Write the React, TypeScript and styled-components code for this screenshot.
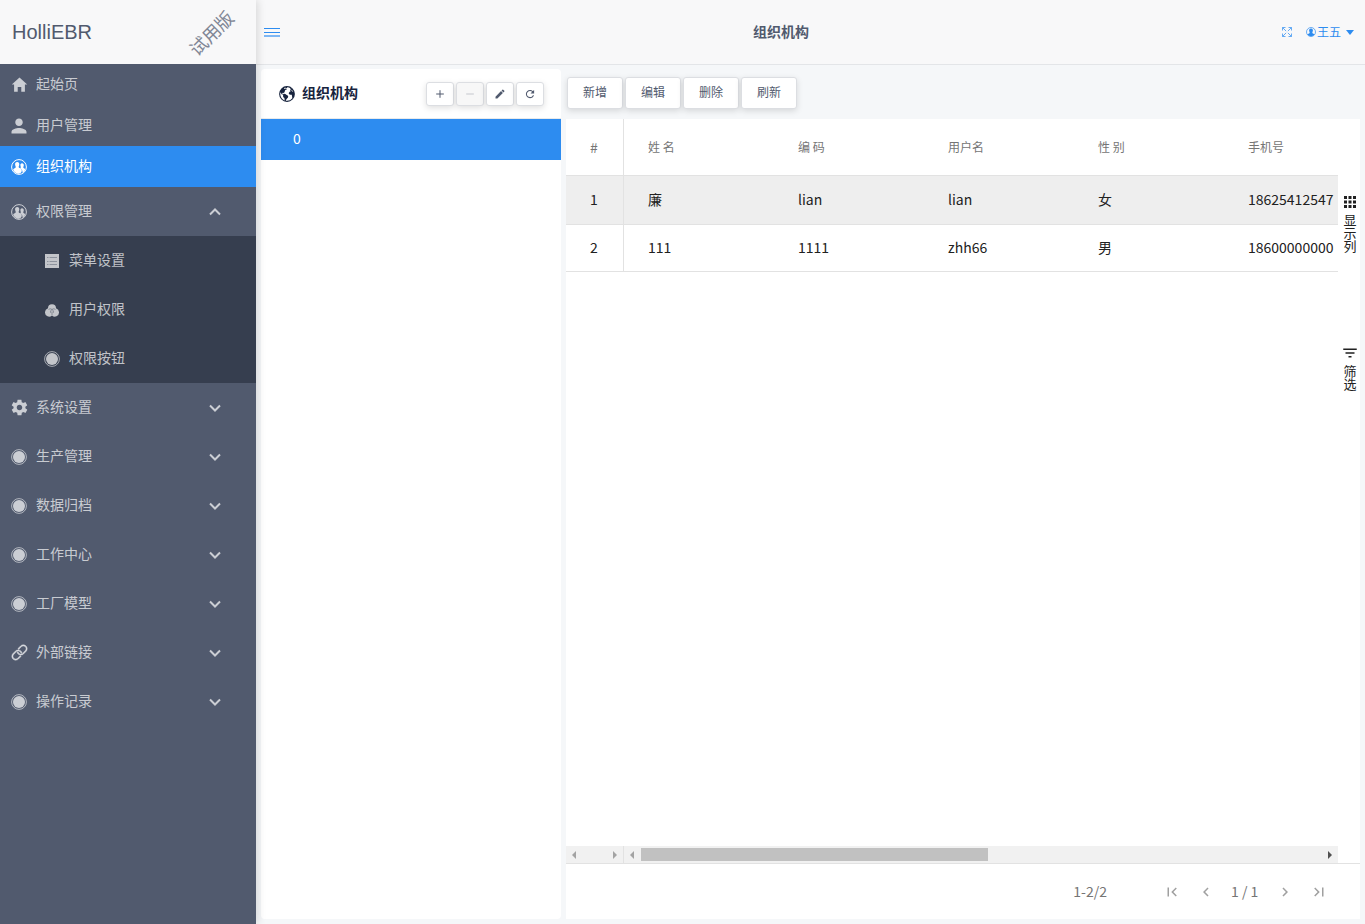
import React from 'react';
import styled, { createGlobalStyle, css } from 'styled-components';
import {
  IoIosAdd, IoIosLink, IoIosRemove, IoMdCreate, IoMdHome, IoMdPerson, IoMdRefresh, IoMdSettings,
} from 'react-icons/io';
import { IoEarth } from 'react-icons/io5';
import { MdApps, MdChevronLeft, MdChevronRight, MdFilterList, MdFirstPage, MdLastPage } from 'react-icons/md';

const GlobalStyle = createGlobalStyle`
  * { box-sizing: border-box; }
  body {
    margin: 0;
    background: #f5f7f9;
    color: #515a6e;
    font: 14px/20px "Noto Sans CJK SC", sans-serif;
  }
  button { font: inherit; color: inherit; padding: 0; border: 0; background: none; cursor: pointer; }
  a { color: inherit; text-decoration: none; }
  svg { display: block; flex: none; }
`;

const Page = styled.div`
  display: flex;
  min-height: 100vh;
`;

const Sidebar = styled.aside`
  flex: 0 0 256px;
  position: relative;
  background: #515a6e;
  box-shadow: 2px 0 8px rgba(0, 0, 0, 0.13);
`;

const Brand = styled.div`
  display: flex;
  align-items: center;
  justify-content: space-between;
  height: 64px;
  padding: 0 17px 0 12px;
  background: #f8f8f9;
  font: 20px/24px "Liberation Sans", "Noto Sans CJK SC", sans-serif;
`;

const Trial = styled.span`
  margin-top: 4px;
  transform: rotate(-45deg);
  color: #808695;
  font-size: 18px;
`;

const Menu = styled.ul`
  margin: 0;
  padding: 0;
  list-style: none;
`;

const SubMenu = styled(Menu)`
  background: #363e4f;
`;

const itemStyle = css<{ $tall?: boolean; $active?: boolean; $sub?: boolean }>`
  display: flex;
  align-items: center;
  gap: 9px;
  width: 100%;
  height: ${(p) => (p.$tall ? 49 : 41)}px;
  padding: 0 35px 0 ${(p) => (p.$sub ? 44 : 11)}px;
  color: ${(p) => (p.$active ? '#fff' : 'rgba(255, 255, 255, 0.7)')};
  background: ${(p) => (p.$active ? '#2d8cf0' : 'transparent')};
  text-align: left;
`;
const ItemLink = styled.a`${itemStyle}`;
const ItemButton = styled.button`${itemStyle}`;

const IconSlot = styled.span`
  flex: 0 0 16px;
  min-width: 0;
  display: flex;
  justify-content: center;
`;

const Label = styled.span`
  flex: 1;
  padding-bottom: 4px;
`;

const Main = styled.div`
  flex: 1;
  min-width: 0;
  display: flex;
  flex-direction: column;
`;

const Header = styled.header`
  display: flex;
  align-items: center;
  height: 65px;
  padding: 0 11px 0 8px;
  background: #f8f8f9;
  border-bottom: 1px solid #e3e5e8;
  color: #2d8cf0;
`;

const Title = styled.h1`
  flex: 1;
  margin: 0;
  padding-bottom: 2px;
  color: #515a6e;
  font-size: 14px;
  font-weight: 700;
  line-height: 20px;
  text-align: center;
`;

const HeaderSide = styled.div`
  display: flex;
  align-items: center;
  gap: 14px;
`;

const User = styled.button`
  display: flex;
  align-items: center;
  gap: 1px;
  font-size: 12px;
`;

const Caret = styled.span`
  margin-left: 4px;
  border: 4px solid transparent;
  border-top: 5px solid #2d8cf0;
  border-bottom: 0;
`;

const Content = styled.div`
  flex: 1;
  display: flex;
  gap: 5px;
  padding: 4px 5px 5px;
`;

const TreePanel = styled.section`
  flex: 0 0 300px;
  background: #fff;
  border-radius: 4px;
`;

const TreeHead = styled.div`
  display: flex;
  align-items: center;
  height: 50px;
  padding: 0 17px;
  border-bottom: 1px solid #e8eaec;
  color: #17233d;
`;

const TreeTitle = styled.h2`
  flex: 1;
  margin: 0 0 0 6px;
  padding-bottom: 4px;
  font-size: 14px;
  font-weight: 700;
  line-height: 20px;
`;

const Tools = styled.div`
  display: flex;
  gap: 2px;
`;

const raised = css`
  display: flex;
  align-items: center;
  justify-content: center;
  border: 1px solid #dcdee2;
  border-radius: 3px;
  background: #fff;
  color: #515a6e;
  box-shadow: 0 2px 6px rgba(0, 0, 0, 0.13);
`;

const ToolButton = styled.button`
  ${raised}
  width: 28px;
  height: 24px;
  &:disabled { background: #f7f7f7; color: #c5c8ce; }
`;

const TreeNode = styled.button`
  display: block;
  width: 100%;
  height: 41px;
  padding: 0 32px 4px;
  background: #2d8cf0;
  color: #fff;
  text-align: left;
`;

const DataArea = styled.section`
  flex: 1;
  min-width: 0;
  display: flex;
  flex-direction: column;
`;

const Toolbar = styled.div`
  display: flex;
  gap: 2px;
  height: 50px;
  padding: 8px 1px;
`;

const ActionButton = styled.button`
  ${raised}
  width: 56px;
  height: 32px;
  padding-bottom: 2px;
  font-size: 12px;
`;

const GridBox = styled.div`
  flex: 1;
  display: flex;
  flex-direction: column;
  background: #fff;
`;

const GridBody = styled.div`
  flex: 1;
  display: flex;
`;

const GridMain = styled.div`
  flex: 1;
  min-width: 0;
  display: flex;
  flex-direction: column;
  justify-content: space-between;
`;

const Table = styled.table`
  width: 100%;
  table-layout: fixed;
  border-collapse: separate;
  border-spacing: 0;
  color: #212121;

  th, td {
    padding: 0 0 0 24px;
    border-bottom: 1px solid #e2e2e2;
    text-align: left;
    white-space: nowrap;
  }
  th { height: 57px; color: #757575; font-size: 12px; font-weight: 400; }
  td { height: 47px; padding-bottom: 2px; }
  th:first-child, td:first-child {
    width: 58px;
    padding-left: 0;
    padding-right: 1px;
    border-right: 1px solid #e2e2e2;
    text-align: center;
  }
  th:first-child { font-size: 14px; }
  th:not(:first-child):not(:last-child) { width: 150px; }
`;

const Row = styled.tr<{ $hover?: boolean }>`
  ${(p) => p.$hover && css`
    background: #eee;
    td { height: 49px; }
  `}
`;

const ScrollRow = styled.div`
  display: flex;
  height: 17px;
  background: #f1f1f1;
`;

const ScrollBar = styled.div<{ $fixed?: boolean }>`
  flex: ${(p) => (p.$fixed ? '0 0 58px' : '1')};
  display: flex;
  align-items: center;
  justify-content: space-between;
  padding: 0 6px;
  border-right: ${(p) => (p.$fixed ? '1px solid #e2e2e2' : '0')};
`;

const Track = styled.div`
  flex: 1;
  margin: 0 7px;
`;

const Thumb = styled.div`
  width: 51%;
  height: 13px;
  background: #c1c1c1;
`;

const Rail = styled.div`
  flex: 0 0 22px;
  display: flex;
  flex-direction: column;
  align-items: center;
  gap: 92px;
  padding: 74px 0 0 2px;
  color: #212121;
`;

const RailButton = styled.button`
  display: flex;
  flex-direction: column;
  align-items: center;
  gap: 2px;
  width: 18px;
  font-size: 13px;
  line-height: 13px;
`;

const Footer = styled.footer`
  display: flex;
  align-items: center;
  justify-content: flex-end;
  height: 56px;
  padding: 0 32px 0 0;
  border-top: 1px solid #e2e2e2;
  color: #757575;
`;

const Range = styled.span`
  margin-right: 56px;
  padding-bottom: 2px;
`;

const Pager = styled.nav`
  display: flex;
  align-items: center;
  gap: 16px;
`;

const PageNumber = styled.span`
  min-width: 29px;
  padding-bottom: 2px;
`;

const PageButton = styled.button`
  color: #a0a0a0;
`;

const Chevron = ({ up }: { up?: boolean }) => (
  <svg width="12" height="8" viewBox="0 0 12 8" fill="none" stroke="currentColor" strokeWidth="2">
    <path d={up ? 'M1 6.5 6 1.5 11 6.5' : 'M1 1.5 6 6.5 11 1.5'} />
  </svg>
);

const Disc = () => (
  <svg width="16" height="16" viewBox="0 0 16 16">
    <circle cx="8" cy="8" r="7.4" fill="none" stroke="currentColor" strokeWidth="0.8" />
    <circle cx="8" cy="8" r="6" fill="currentColor" />
  </svg>
);

const People = () => (
  <svg width="16" height="16" viewBox="0 0 16 16">
    <circle cx="8" cy="8" r="7.4" fill="none" stroke="currentColor" strokeWidth="1" />
    <g fill="currentColor">
      <path d="M6.200 3c1.500 0 2.200 1.100 2.100 2.500-.1 1.200-.6 1.700-.7 2.500 0 1.100 3 1 3.200 3.500.1 1.300-1 3-3 3.200-2.500 0-5-1.700-5.700-4.200.6-1.500 2.700-1.300 2.700-2.500-.1-.8-.6-1.300-.7-2.500C4 4.100 4.700 3 6.200 3z" />
      <path d="M11 4.200c1.200 0 1.900 1 1.800 2.100-.1 1-.5 1.500-.5 2.200 0 .8 1.500.9 2 1.900-.6 1.500-1.500 2.500-2.800 3.300.2-2.400-.6-3.500-2.200-4.300.9-.9.300-1.800.1-3.100-.1-1.100.4-2.100 1.600-2.100z" />
    </g>
  </svg>
);

const ListBox = () => (
  <svg width="14" height="14" viewBox="0 0 14 14">
    <path d="M0 0h14v14H0z" fill="currentColor" />
    <path d="M2 3.5h1.5M4.5 3.5H12M2 7.500h1.500M4.500 7.500H12M2 10.500h1.500M4.500 10.500H12" stroke="#8d929d" />
  </svg>
);

const Circles = () => (
  <svg width="14" height="14" viewBox="0 0 14 14">
    <path
      d="M3 5.200a4 4 0 1 1 8 0 4.300 4.300 0 0 1 3 4.300 4.100 4.100 0 0 1-7 3 4.100 4.100 0 0 1-7-3 4.300 4.300 0 0 1 3-4.300z"
      fill="currentColor"
    />
    <path
      d="M3.500 6.500Q5 5 7 6.400q2-1.400 3.500.1M7 6.400q-2.200 1.600-1.400 3.400M7 6.400q2.200 1.600 1.400 3.400M7 8.500v3.500"
      fill="none" stroke="#6d7380" strokeWidth="0.7"
    />
  </svg>
);

const Fullscreen = () => (
  <svg width="10" height="10" viewBox="0 0 10 10" fill="none" stroke="currentColor" strokeWidth="0.9" opacity="0.8">
    <path d="M.5 3.500v-3h3M6.500.5h3v3M9.500 6.500v3h-3M3.500 9.500h-3v-3M.5.5l3.600 3.600M9.500.5 5.900 4.100M9.500 9.500 5.900 5.900M.5 9.500l3.600-3.600" />
  </svg>
);

const UserMark = () => (
  <svg width="10" height="10" viewBox="0 0 10 10">
    <circle cx="5" cy="5" r="4.500" fill="none" stroke="currentColor" strokeWidth="0.7" />
    <path d="M5 1.400c1.500 0 2 1 1.900 2.200-.1 1-.5 1.500-.6 2.200 0 .8 1.500.9 2.200 1.700A4.300 4.300 0 0 1 5 9.300a4.300 4.300 0 0 1-3.500-1.800c.7-.8 2.200-.9 2.200-1.700-.1-.7-.5-1.200-.6-2.200C3 2.400 3.500 1.400 5 1.400z" fill="currentColor" />
  </svg>
);

const Arrow = ({ right, dark }: { right?: boolean; dark?: boolean }) => (
  <svg width="4" height="8" viewBox="0 0 4 8" fill={dark ? '#505050' : '#a3a3a3'}>
    <path d={right ? 'M0 0 4 4 0 8z' : 'M4 0 0 4 4 8z'} />
  </svg>
);

const pages = [
  { name: '起始页', icon: <IoMdHome size={19} /> },
  { name: '用户管理', icon: <IoMdPerson size={20} /> },
  { name: '组织机构', icon: <People />, active: true },
];
const rights = [
  { name: '菜单设置', icon: <ListBox /> },
  { name: '用户权限', icon: <Circles /> },
  { name: '权限按钮', icon: <Disc /> },
];
const groups = [
  { name: '系统设置', icon: <IoMdSettings size={19} /> },
  { name: '生产管理', icon: <Disc /> },
  { name: '数据归档', icon: <Disc /> },
  { name: '工作中心', icon: <Disc /> },
  { name: '工厂模型', icon: <Disc /> },
  { name: '外部链接', icon: <IoIosLink size={19} stroke="currentColor" strokeWidth={12} /> },
  { name: '操作记录', icon: <Disc /> },
];
const columns = ['#', '姓 名', '编 码', '用户名', '性 别', '手机号'];
const rows = [
  ['1', '廉', 'lian', 'lian', '女', '18625412547'],
  ['2', '111', '1111', 'zhh66', '男', '18600000000'],
];

export default function App() {
  return (
    <Page>
      <GlobalStyle />
      <Sidebar>
        <Brand>HolliEBR<Trial>试用版</Trial></Brand>
        <Menu>
          {pages.map((p) => (
            <li key={p.name}>
              <ItemLink href="#" $active={p.active}><IconSlot>{p.icon}</IconSlot><Label>{p.name}</Label></ItemLink>
            </li>
          ))}
          <li>
            <ItemButton $tall aria-expanded="true">
              <IconSlot><People /></IconSlot><Label>权限管理</Label><Chevron up />
            </ItemButton>
            <SubMenu>
              {rights.map((r) => (
                <li key={r.name}>
                  <ItemLink href="#" $tall $sub><IconSlot>{r.icon}</IconSlot><Label>{r.name}</Label></ItemLink>
                </li>
              ))}
            </SubMenu>
          </li>
          {groups.map((g) => (
            <li key={g.name}>
              <ItemButton $tall aria-expanded="false">
                <IconSlot>{g.icon}</IconSlot><Label>{g.name}</Label><Chevron />
              </ItemButton>
            </li>
          ))}
        </Menu>
      </Sidebar>
      <Main>
        <Header>
          <HeaderSide>
            <button aria-label="菜单">
              <svg width="16" height="10" viewBox="0 0 16 10" fill="none" stroke="currentColor">
                <path d="M0 1.5h16M0 5.5h16" />
                <path d="M0 9h16" strokeWidth="2" opacity="0.6" />
              </svg>
            </button>
          </HeaderSide>
          <Title>组织机构</Title>
          <HeaderSide>
            <button aria-label="全屏"><Fullscreen /></button>
            <User><UserMark />王五<Caret /></User>
          </HeaderSide>
        </Header>
        <Content>
          <TreePanel>
            <TreeHead>
              <IoEarth size={18} />
              <TreeTitle>组织机构</TreeTitle>
              <Tools>
                <ToolButton aria-label="新增"><IoIosAdd size={16} /></ToolButton>
                <ToolButton aria-label="删除" disabled><IoIosRemove size={16} /></ToolButton>
                <ToolButton aria-label="编辑"><IoMdCreate size={12} /></ToolButton>
                <ToolButton aria-label="刷新"><IoMdRefresh size={12} /></ToolButton>
              </Tools>
            </TreeHead>
            <TreeNode>0</TreeNode>
          </TreePanel>
          <DataArea>
            <Toolbar>
              {['新增', '编辑', '删除', '刷新'].map((t) => <ActionButton key={t}>{t}</ActionButton>)}
            </Toolbar>
            <GridBox>
              <GridBody>
                <GridMain>
                  <Table>
                    <thead><tr>{columns.map((c) => <th key={c}>{c}</th>)}</tr></thead>
                    <tbody>
                      {rows.map((r, i) => (
                        <Row key={r[0]} $hover={i === 0}>{r.map((c, j) => <td key={j}>{c}</td>)}</Row>
                      ))}
                    </tbody>
                  </Table>
                  <ScrollRow>
                    <ScrollBar $fixed><Arrow /><Arrow right /></ScrollBar>
                    <ScrollBar><Arrow /><Track><Thumb /></Track><Arrow right dark /></ScrollBar>
                  </ScrollRow>
                </GridMain>
                <Rail>
                  <RailButton><MdApps size={18} />显示列</RailButton>
                  <RailButton><MdFilterList size={18} />筛选</RailButton>
                </Rail>
              </GridBody>
              <Footer>
                <Range>1-2/2</Range>
                <Pager>
                  <PageButton aria-label="首页"><MdFirstPage size={18} /></PageButton>
                  <PageButton aria-label="上一页"><MdChevronLeft size={18} /></PageButton>
                  <PageNumber>1 / 1</PageNumber>
                  <PageButton aria-label="下一页"><MdChevronRight size={18} /></PageButton>
                  <PageButton aria-label="末页"><MdLastPage size={18} /></PageButton>
                </Pager>
              </Footer>
            </GridBox>
          </DataArea>
        </Content>
      </Main>
    </Page>
  );
}
